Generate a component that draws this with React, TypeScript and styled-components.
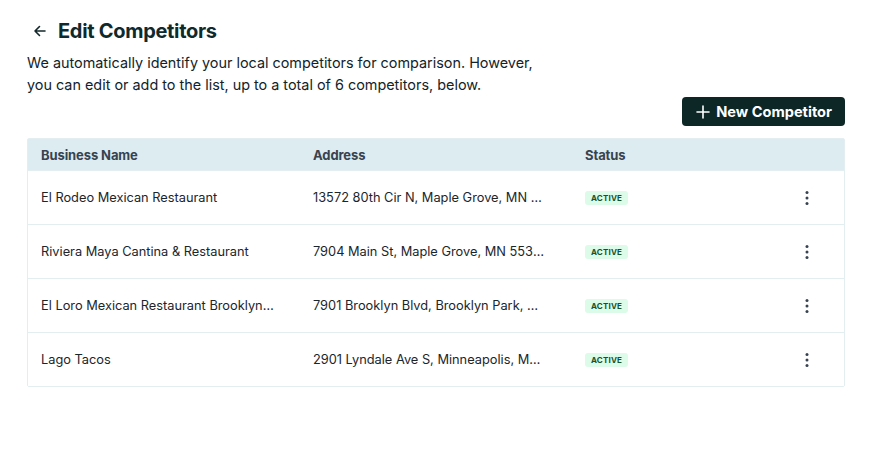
import React from "react";
import styled, { createGlobalStyle } from "styled-components";

const Global = createGlobalStyle`
  body { margin: 0; background: #fff; font-family: Inter, "Noto Sans", sans-serif; color: #13282b; }
`;

const Page = styled.div`
  padding: 17px 37px 0 27px;
  display: flex;
  flex-direction: column;
`;

const TitleRow = styled.div`
  display: flex;
  align-items: center;
  gap: 10px;
  height: 28px;
  padding-left: 5px;
`;

const BackIcon = styled.svg`
  width: 16px;
  height: 16px;
  color: #13282b;
`;

const Title = styled.h1`
  margin: 0;
  font-size: 20px;
  font-weight: 700;
  color: #0f2a2c;
  letter-spacing: -0.3px;
`;

const Description = styled.p`
  margin: 7px 0 0;
  font-size: 14.4px;
  line-height: 22px;
  color: #13232a;
  width: 520px;
`;

const Toolbar = styled.div`
  display: flex;
  justify-content: flex-end;
  margin-top: 1px;
`;

const PrimaryButton = styled.button`
  display: flex;
  align-items: center;
  gap: 6px;
  height: 29px;
  padding: 0 13px 0 14px;
  background: #0d2626;
  color: #fff;
  border: none;
  border-radius: 4px;
  font-family: Inter, sans-serif;
  font-size: 14.6px;
  font-weight: 700;
  letter-spacing: 0;
`;

const Table = styled.div`
  margin-top: 12px;
  border: 1px solid #e3eef1;
  border-radius: 2px;
`;

const Row = styled.div<{ $header?: boolean }>`
  display: grid;
  grid-template-columns: 272px 272px 1fr 60px;
  align-items: center;
  height: ${(p) => (p.$header ? "31px" : "53px")};
  padding-left: 13px;
  background: ${(p) => (p.$header ? "#dcecf0" : "#fff")};
  border-top: ${(p) => (p.$header ? "none" : "1px solid #e3eef1")};
`;

const HeadCell = styled.div`
  font-size: 13px;
  font-weight: 700;
  color: #374350;
  letter-spacing: -0.1px;
`;

const Cell = styled.div<{ $max: number }>`
  font-size: 12.8px;
  color: #1b262c;
  white-space: nowrap;
  overflow: hidden;
  text-overflow: ellipsis;
  max-width: ${(p) => p.$max}px;
`;

const StatusCell = styled.div`
  display: flex;
  align-items: center;
`;

const Badge = styled.span`
  display: inline-block;
  background: #dcfbe8;
  color: #14532d;
  font-size: 8px;
  font-weight: 700;
  letter-spacing: 0.2px;
  line-height: 10px;
  padding: 2px 6px;
  border-radius: 3px;
`;

const MenuButton = styled.div`
  display: flex;
  justify-content: flex-start;
  padding-left: 21px;
  color: #374350;
`;

const rows = [
  ["El Rodeo Mexican Restaurant", "13572 80th Cir N, Maple Grove, MN 55369"],
  ["Riviera Maya Cantina & Restaurant", "7904 Main St, Maple Grove, MN 55369"],
  ["El Loro Mexican Restaurant Brooklyn Park", "7901 Brooklyn Blvd, Brooklyn Park, MN 55445"],
  ["Lago Tacos", "2901 Lyndale Ave S, Minneapolis, MN 55408"],
];

export default function App() {
  return (
    <>
      <Global />
      <Page>
        <TitleRow>
          <BackIcon viewBox="0 0 16 16" fill="none" stroke="currentColor" strokeWidth="1.6" strokeLinecap="round" strokeLinejoin="round">
            <path d="M13 8H3M7.5 3.5L3 8l4.5 4.5" />
          </BackIcon>
          <Title>Edit Competitors</Title>
        </TitleRow>
        <Description>
          We automatically identify your local competitors for comparison. However, you can edit or add to the list, up to a total of 6 competitors, below.
        </Description>
        <Toolbar>
          <PrimaryButton>
            <svg width="14" height="14" viewBox="0 0 14 14" stroke="#fff" strokeWidth="1.6" strokeLinecap="round">
              <path d="M7 1v12M1 7h12" />
            </svg>
            New Competitor
          </PrimaryButton>
        </Toolbar>
        <Table>
          <Row $header>
            <HeadCell>Business Name</HeadCell>
            <HeadCell>Address</HeadCell>
            <HeadCell>Status</HeadCell>
            <HeadCell />
          </Row>
          {rows.map(([name, addr]) => (
            <Row key={name}>
              <Cell $max={236}>{name}</Cell>
              <Cell $max={232}>{addr}</Cell>
              <StatusCell><Badge>ACTIVE</Badge></StatusCell>
              <MenuButton>
                <svg width="4" height="16" viewBox="0 0 4 16" fill="currentColor">
                  <circle cx="2" cy="2.5" r="1.5" />
                  <circle cx="2" cy="8" r="1.5" />
                  <circle cx="2" cy="13.5" r="1.5" />
                </svg>
              </MenuButton>
            </Row>
          ))}
        </Table>
      </Page>
    </>
  );
}
